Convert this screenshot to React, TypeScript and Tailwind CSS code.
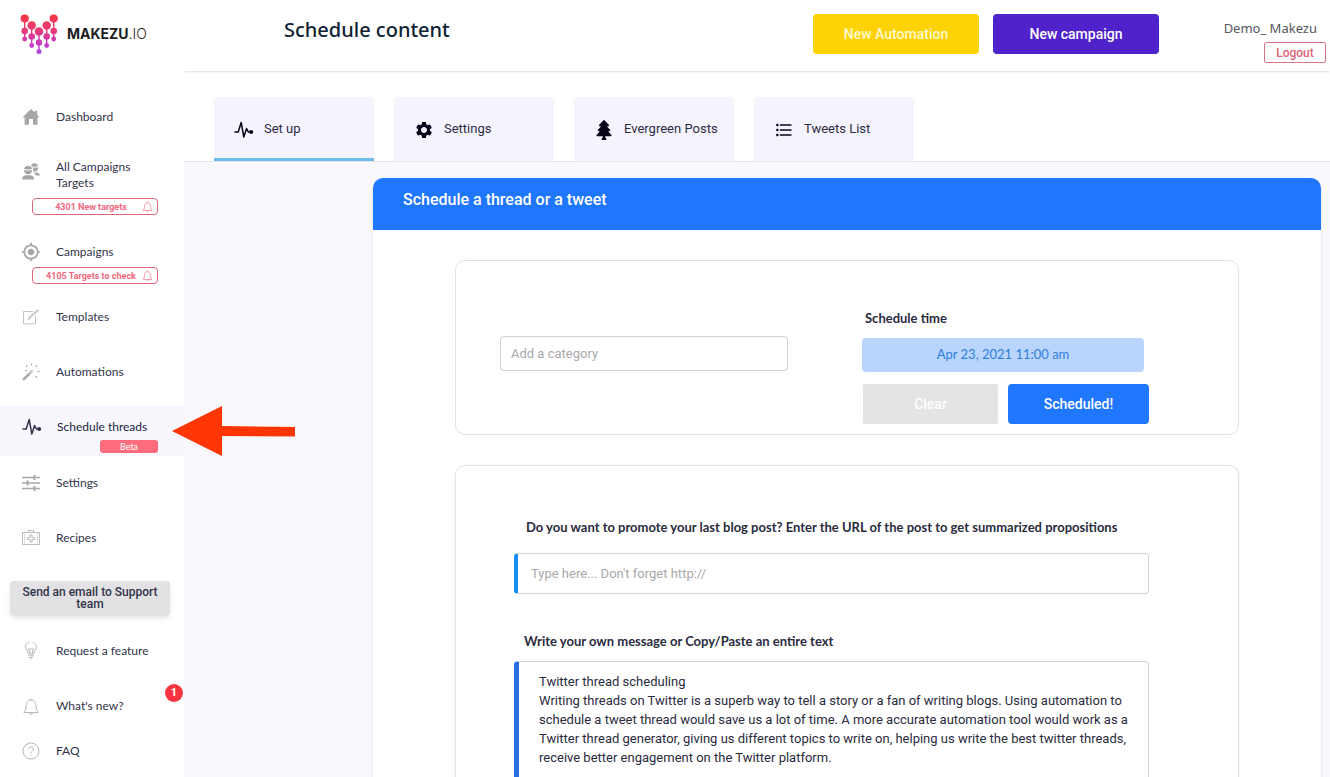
import type { ReactNode } from 'react';
import { FaTree } from 'react-icons/fa';
import { MdFormatListBulleted, MdMyLocation, MdSettings } from 'react-icons/md';

const message = `Twitter thread scheduling
Writing threads on Twitter is a superb way to tell a story or a fan of writing blogs. Using automation to schedule a tweet thread would save us a lot of time. A more accurate automation tool would work as a Twitter thread generator, giving us different topics to write on, helping us write the best twitter threads, receive better engagement on the Twitter platform.`;

function Logo() {
  return (
    <svg width="38" height="41" viewBox="0 0 38 41" aria-hidden="true">
      <defs>
        <linearGradient id="logo" x1="0" y1="0" x2="0" y2="41" gradientUnits="userSpaceOnUse">
          <stop offset="0" stopColor="#fb3540" />
          <stop offset="0.4" stopColor="#e83a78" />
          <stop offset="0.75" stopColor="#c53bc8" />
          <stop offset="1" stopColor="#a04fd0" />
        </linearGradient>
      </defs>
      <g fill="url(#logo)">
        <rect x="4" y="5" width="1.400" height="20" />
        <rect x="11" y="11" width="1.400" height="20" />
        <rect x="18.300" y="17" width="1.400" height="20" />
        <rect x="26" y="11" width="1.400" height="20" />
        <rect x="33" y="5" width="1.400" height="20" />
        <circle cx="4.700" cy="4.500" r="4.100" />
        <circle cx="33.700" cy="4.500" r="4.100" />
        <circle cx="11.700" cy="11.500" r="4.200" />
        <circle cx="26.700" cy="11.500" r="4.200" />
        <circle cx="19" cy="17.500" r="4.300" />
        <circle cx="4.700" cy="17" r="3.300" />
        <circle cx="33.700" cy="17" r="3.300" />
        <circle cx="11.700" cy="22.500" r="3.300" />
        <circle cx="26.700" cy="22.500" r="3.300" />
        <circle cx="19" cy="28.500" r="3.200" />
        <circle cx="4.700" cy="25" r="2.400" />
        <circle cx="33.700" cy="25" r="2.400" />
        <circle cx="11.700" cy="31.500" r="2.400" />
        <circle cx="26.700" cy="31.500" r="2.400" />
        <circle cx="19" cy="37.500" r="2.500" />
      </g>
    </svg>
  );
}

function LineIcon({ children, className = 'text-[#b8b8b8]' }: { children: ReactNode; className?: string }) {
  return (
    <svg
      width="18"
      height="18"
      viewBox="0 0 18 18"
      fill="none"
      stroke="currentColor"
      strokeLinejoin="round"
      className={`shrink-0 ${className}`}
      aria-hidden="true"
    >
      {children}
    </svg>
  );
}

function HomeIcon() {
  return (
    <LineIcon className="text-[#a6a6a6]">
      <path fill="currentColor" stroke="none" d="M9 1 12.800 4.500V2.800h2.400v4L17.600 9.200H15.500V16.800H11V11H7V16.800H2.600V9.200H.5Z" />
    </LineIcon>
  );
}

function UsersIcon() {
  return (
    <LineIcon className="text-[#a6a6a6]">
      <g fill="currentColor" stroke="none">
        <path d="M9 3.500a3.900 3.900 0 0 1 7.300.6q-3.800.9-6.300.4ZM10.800 5.400q3 .5 5.500-.2-.1 4.200-3.400 4.400-1.300-.1-1.900-.9.500-1.700-.2-3.300Z" />
        <path d="M11.600 10.600Q17.600 9.800 18 13.400H13.800Q13.300 11.600 11.600 10.600Z" />
        <path d="M2 7a4.200 4.200 0 0 1 8.200 0Q6.500 8.200 2 7ZM2 8q4.200 1 8.200 0-.4 4.400-4.100 4.400Q2.300 12.200 2 8Z" />
        <path d="M0 17.400Q.2 13.500 3.600 13.200h5Q12 13.500 12.200 17.400Z" />
      </g>
    </LineIcon>
  );
}

function EditIcon() {
  return (
    <LineIcon className="text-[#c4c4c4]">
      <path d="M13.500 7.500v8.300H1.500V3.500h9.500" />
      <path strokeWidth="1.800" d="M7 10 16.300 2" />
      <path d="m6.200 11.500 1-2 1.300 1Z" />
    </LineIcon>
  );
}

function WandIcon() {
  return (
    <LineIcon className="text-[#a8a8a8]">
      <path strokeWidth="2.600" strokeLinecap="round" d="M1.800 16.200 7.200 10.800" />
      <path strokeWidth="2.600" strokeLinecap="round" className="text-[#c6c6c6]" stroke="currentColor" d="m8 10 1.800-1.800" />
      <path strokeWidth="1.200" d="M9.500.5v2M4 2.500l1.200 1.400M15 2.500l-1.300 1.400M15.500 8.500h2.200M13.500 13l1.500 1.500M3 7.500h2" />
    </LineIcon>
  );
}

function PulseIcon({ className }: { className?: string }) {
  return (
    <svg width="20" height="18" viewBox="0 0 20 18" fill="none" stroke="currentColor" className={`shrink-0 ${className ?? ''}`} aria-hidden="true">
      <path strokeWidth="1.500" strokeLinejoin="round" strokeLinecap="round" d="M1 11h3.200L7.200 1.500l2.600 14.500 2.800-8.500 1.800 3.500H17" />
      <circle cx="17.200" cy="11" r="2" fill="currentColor" stroke="none" />
    </svg>
  );
}

function SlidersIcon() {
  return (
    <LineIcon className="text-[#a8a8a8]">
      <path strokeWidth="1.300" d="M0 3.500h18M0 9h18M0 14.500h18" />
      <path strokeWidth="2" d="M12.500 1v5M5.500 6.500v5M12.500 12v5" />
    </LineIcon>
  );
}

function MedkitIcon() {
  return (
    <LineIcon className="text-[#bdbdbd]">
      <path d="M.5 3.500h17v12H.5ZM6.500 3.500v-2h5v2" />
      <path strokeWidth="0.500" d="M2.500 3.500v12M15.500 3.500v12" />
      <path d="M8 6h2v2.500h2.500v2H10V13H8v-2.500H5.500v-2H8Z" />
    </LineIcon>
  );
}

function BulbIcon() {
  return (
    <LineIcon>
      <path d="M6.300 12Q6 10 4.600 8A5.300 5.300 0 1 1 13.400 8Q12 10 11.700 12Z" />
      <path d="M8 12 6.500 6.500l1.300 1L9 6.500l1.200 1 1.300-1L10 12M6.500 13.800h5M7 15.500h4M8.300 17.200h1.500" />
    </LineIcon>
  );
}

const bell = (
  <>
    <path d="M1.800 15.500h14.400Q14 14 13.900 9C13.800 5 12 3 9 3S4.200 5 4.100 9Q4 14 1.800 15.500Z" />
    <path d="M8 3a1 1 0 0 1 2 0M7.500 15.800a1.500 1.500 0 0 0 3 0" />
  </>
);

function HelpIcon() {
  return (
    <LineIcon>
      <circle cx="9" cy="9" r="8" />
      <path d="M6.700 7.300a2.300 2.300 0 1 1 3.500 2Q9 10 9 11.500M9 12.800v1.200" />
    </LineIcon>
  );
}

function TargetBadge({ children }: { children: ReactNode }) {
  return (
    <span className="relative ml-8 flex h-[17px] w-[126px] items-center justify-center rounded border border-[#e0647c] pr-2 font-[Roboto] text-[9px] font-bold text-[#f0687e]">
      {children}
      <svg width="11" height="11" viewBox="0 0 18 18" fill="none" stroke="currentColor" className="absolute right-1" aria-hidden="true">
        {bell}
      </svg>
    </span>
  );
}

function NavItem({ icon, label, className = 'h-[55px]' }: { icon: ReactNode; label: string; className?: string }) {
  return (
    <a href="#" className={`flex shrink-0 items-center pl-[22px] ${className}`}>
      {icon}
      <span className="ml-4 w-[100px]">{label}</span>
    </a>
  );
}

function Sidebar() {
  return (
    <aside className="z-20 flex w-[184px] shrink-0 flex-col bg-white font-[Lato] text-[12px] leading-4 text-[#33334a]">
      <a href="#" className="mb-[21px] flex h-[68px] shrink-0 items-center gap-[9px] pl-5 font-[Inter] text-sm text-[#1d1d22]">
        <Logo />
        <span><b className="font-bold">MAKEZU</b><span className="font-light">.IO</span></span>
      </a>
      <nav className="flex flex-col">
        <NavItem icon={<HomeIcon />} label="Dashboard" />
        <div className="mt-[15px] mb-[27px]">
          <a href="#" className="flex pl-[22px]">
            <span className="mt-[3px]"><UsersIcon /></span>
            <span className="ml-4 w-20">All Campaigns Targets</span>
          </a>
          <div className="mt-[7px]"><TargetBadge>4301 New targets</TargetBadge></div>
        </div>
        <div className="mb-[5px]">
          <NavItem icon={<MdMyLocation className="size-5 shrink-0 -mx-px text-[#a6a6a6]" />} label="Campaigns" className="h-5" />
          <div className="mt-[5px]"><TargetBadge>4105 Targets to check</TargetBadge></div>
        </div>
        <NavItem icon={<EditIcon />} label="Templates" />
        <NavItem icon={<WandIcon />} label="Automations" />
        <a href="#" aria-current="page" className="mt-[6px] block h-[51px] bg-[#f8f7fd] pt-[13px] text-[#1b2440]">
          <span className="flex items-center gap-[15px] pl-[22px]">
            <PulseIcon className="text-[#33334a]" />
            Schedule threads
          </span>
          <span className="mt-1 ml-[100px] flex h-[13px] w-[58px] items-center justify-center rounded-[3px] bg-[#fc6c7c] text-[9px] text-white">Beta</span>
        </a>
        <NavItem icon={<SlidersIcon />} label="Settings" className="h-[54px]" />
        <NavItem icon={<MedkitIcon />} label="Recipes" />
        <button className="mx-[10px] mt-4 mb-2 h-[34px] w-40 rounded-[3px] bg-[#e2e2e5] font-[Roboto] text-[12px] leading-3 font-medium text-[#33334a] shadow-md">
          Send an email to Support team
        </button>
        <NavItem icon={<BulbIcon />} label="Request a feature" />
        <div className="relative">
          <NavItem icon={<LineIcon>{bell}</LineIcon>} label="What's new?" />
          <span className="absolute top-[6px] right-[1px] flex size-[18px] items-center justify-center rounded-full bg-[#f8353f] font-[Roboto] text-[11px] font-bold text-white">1</span>
        </div>
        <NavItem icon={<HelpIcon />} label="FAQ" className="h-9" />
      </nav>
    </aside>
  );
}

const tabs = [
  { label: 'Set up', icon: <PulseIcon />, active: true },
  { label: 'Settings', icon: <MdSettings className="size-5" />, active: false },
  { label: 'Evergreen Posts', icon: <FaTree className="size-5" />, active: false },
  { label: 'Tweets List', icon: <MdFormatListBulleted className="size-5" />, active: false },
];

export default function App() {
  return (
    <div className="relative flex h-screen overflow-hidden bg-[#f8f8fd] font-[Roboto] text-[13px] text-[#2b2b40]">
      <Sidebar />

      <div className="flex min-w-0 flex-1 flex-col">
        {/* Top bar */}
        <header className="z-10 flex h-[71px] shrink-0 items-start bg-white pr-1 shadow">
          <h1 className="mt-[14px] ml-[100px] font-['Noto_Sans'] text-[20px] leading-8 font-medium text-[#0e2233]">Schedule content</h1>
          <div className="mt-[14px] ml-auto flex gap-[14px] text-sm font-medium text-white">
            <button className="h-10 w-[166px] rounded bg-[#ffd204] text-[#fff9d0]">New Automation</button>
            <button className="h-10 w-[166px] rounded bg-[#4f22cc]">New campaign</button>
          </div>
          <div className="mt-[18px] flex w-[167px] flex-col items-end gap-1">
            <span className="mr-[9px] font-['Noto_Sans'] text-[13px] leading-5 text-[#55555c]">Demo_ Makezu</span>
            <button className="h-[21px] w-[62px] rounded-[2px] border border-[#dd7384] text-[12px] font-medium text-[#dd6478]">Logout</button>
          </div>
        </header>

        <main className="min-h-0 flex-1 overflow-y-auto [scrollbar-width:none]">
          {/* Tabs */}
          <div role="tablist" className="flex gap-5 border-b border-[#e4e4ea] bg-white pt-[26px] pl-[30px]">
            {tabs.map((tab) => (
              <button
                key={tab.label}
                role="tab"
                aria-selected={tab.active}
                className={`flex h-16 w-40 items-center gap-[10px] rounded-t border-b-[3px] bg-[#f5f3fd] pt-[2px] pl-5 ${tab.active ? 'border-[#70bbe6]' : 'border-[#f5f3fd]'}`}
              >
                <span className="mt-[2px] text-[#08081a]">{tab.icon}</span>
                <span>{tab.label}</span>
              </button>
            ))}
          </div>

          {/* Schedule form */}
          <section className="mt-4 mr-[9px] ml-[189px] rounded-[10px] bg-white shadow">
            <h2 className="h-[52px] rounded-t-[10px] bg-[#1f76ff] pt-[10px] pl-[30px] text-base font-medium text-white">Schedule a thread or a tweet</h2>

            <form className="px-[82px] py-[30px]">
              <div className="flex items-start justify-between rounded-[10px] border border-[#e2e2e4] pt-[47px] pr-[89px] pb-[10px] pl-11">
                <input
                  aria-label="Category"
                  placeholder="Add a category"
                  className="mt-7 h-[35px] w-[288px] rounded border border-[#d2d2d4] px-[10px] placeholder:text-[#a9a9ab]"
                />
                <div className="w-[287px]">
                  <label htmlFor="time" className="ml-[3px] block font-[Lato] leading-5 font-bold">Schedule time</label>
                  <input
                    id="time"
                    defaultValue="Apr 23, 2021 11:00 am"
                    className="mt-[10px] h-[34px] w-[282px] rounded bg-[#b9d5fd] pb-[2px] text-center font-[Lato] text-[13px] text-[#2f7ddd]"
                  />
                  <div className="mt-3 flex gap-[10px] pl-[1px] text-sm font-medium text-white">
                    <button type="button" className="h-10 w-[135px] rounded-[2px] bg-[#e4e4e4]">Clear</button>
                    <button type="button" className="h-10 flex-1 rounded bg-[#1f76ff]">Scheduled!</button>
                  </div>
                </div>
              </div>

              <div className="mt-[30px] rounded-[10px] border border-[#e2e4e8] pt-[51px] pr-[89px] pb-12 pl-[58px] shadow-sm">
                <label htmlFor="url" className="ml-3 block font-[Lato] leading-5 font-bold">
                  Do you want to promote your last blog post? Enter the URL of the post to get summarized propositions
                </label>
                <input
                  id="url"
                  placeholder="Type here... Don't forget http://"
                  className="mt-4 h-[41px] w-full rounded border border-l-4 border-[#d2d2d4] border-l-[#1a8df0] px-[13px] placeholder:text-[#a9a9ab]"
                />
                <label htmlFor="message" className="mt-[37px] ml-[10px] block font-[Lato] leading-5 font-bold">
                  Write your own message or Copy/Paste an entire text
                </label>
                <textarea
                  id="message"
                  rows={10}
                  defaultValue={message}
                  className="mt-[10px] block w-full resize-none rounded border border-l-[5px] border-[#d2d2d4] border-l-[#2b6fe4] py-[10px] pr-4 pl-5 leading-[19px]"
                />
              </div>
            </form>
          </section>
        </main>
      </div>

      {/* Pointer to the active menu entry */}
      <svg width="123" height="50" viewBox="0 0 123 50" className="absolute top-[406px] left-[172px] z-20" aria-hidden="true">
        <path fill="#ff3503" d="M0 25 50 0V20L123 21V30.500L50 30V50Z" />
      </svg>
    </div>
  );
}
